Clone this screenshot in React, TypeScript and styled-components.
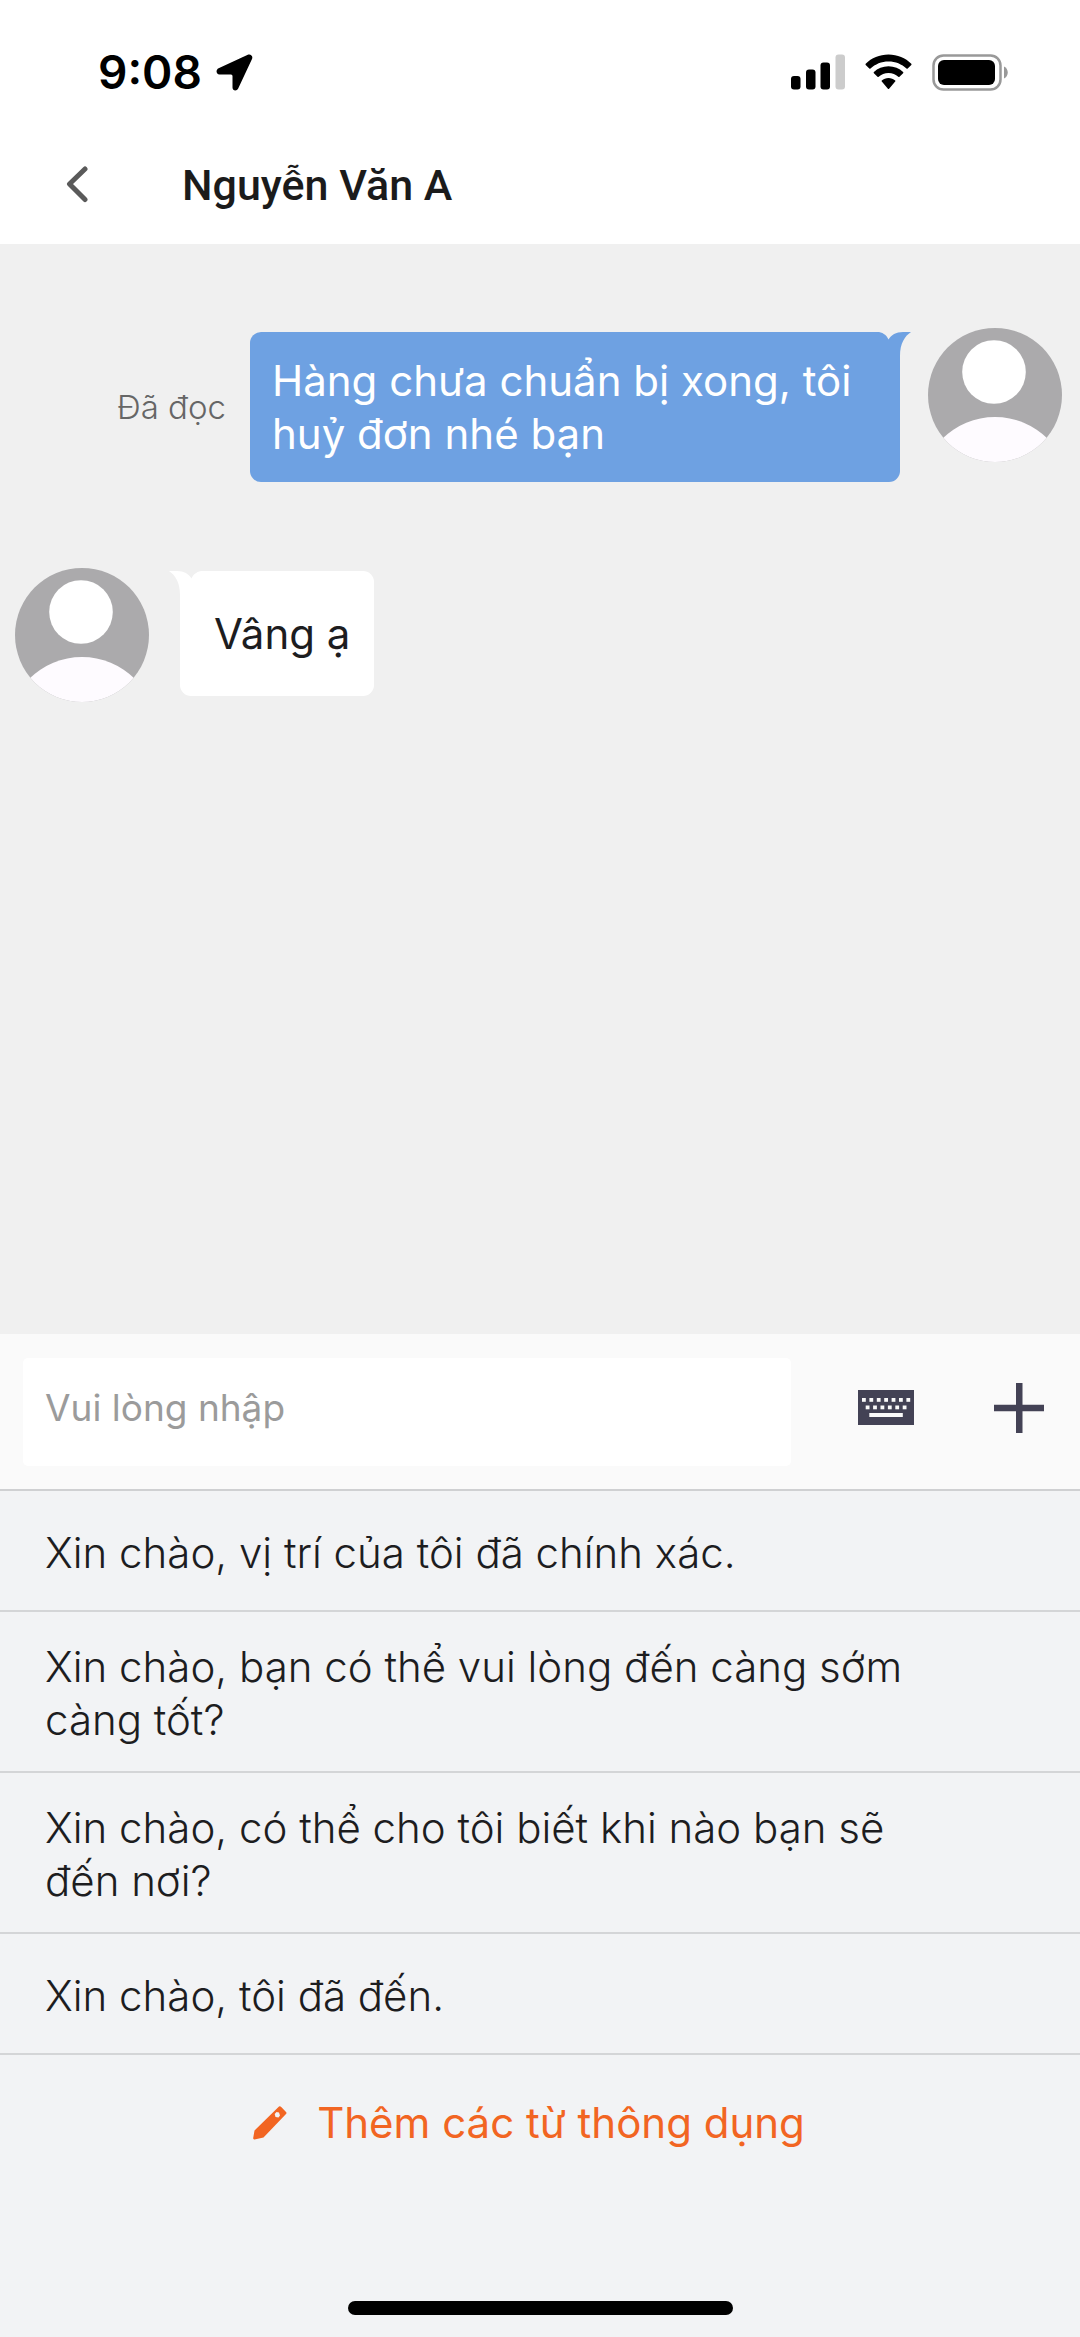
import React from "react";
import styled, { createGlobalStyle } from "styled-components";

const ui = `Inter, "Liberation Sans", sans-serif`;

const GlobalStyle = createGlobalStyle`
  * { box-sizing: border-box; }
  html, body { margin: 0; }
  body { background: #f2f3f5; font-family: ${ui}; color: #1d1d1f; }
  button, input { font: inherit; color: inherit; }
  button { border: 0; padding: 0; background: none; cursor: pointer; }
  svg { display: block; flex: none; }
`;

const Screen = styled.div`
  display: flex;
  flex-direction: column;
  min-height: 100vh;
`;

const StatusBar = styled.div`
  display: flex;
  align-items: center;
  justify-content: space-between;
  height: 144px;
  padding: 0 72px 0 98px;
  background: #fff;
  color: #000;
`;

const StatusGroup = styled.div<{ $gap: number }>`
  display: flex;
  align-items: center;
  gap: ${(p) => p.$gap}px;
`;

const Time = styled.span`
  font-size: 46px;
  line-height: 60px;
  font-weight: 600;
`;

const Header = styled.header`
  display: flex;
  align-items: center;
  gap: 60px;
  height: 100px;
  padding: 0 32px 18px;
  background: #fff;
`;

const BackButton = styled.button`
  display: flex;
  align-items: center;
  justify-content: center;
  width: 90px;
  height: 76px;
`;

const Title = styled.h1`
  margin: 0;
  font-family: Roboto, "Liberation Sans", sans-serif;
  font-size: 43px;
  line-height: 56px;
  font-weight: 500;
  color: #1b1b1b;
`;

const Thread = styled.main`
  flex: 1;
  display: flex;
  flex-direction: column;
  gap: 86px;
  padding: 84px 18px 0 15px;
  background: #f0f0f0;
`;

const MessageRow = styled.div<{ $mine?: boolean }>`
  display: flex;
  flex-direction: ${(p) => (p.$mine ? "row-reverse" : "row")};
  align-items: flex-start;
  gap: ${(p) => (p.$mine ? 28 : 31)}px;
`;

const BubbleGroup = styled.div`
  flex: 1;
  display: flex;
  align-items: center;
  justify-content: flex-end;
  gap: 24px;
  padding-top: 4px;
`;

const Bubble = styled.div<{ $mine?: boolean }>`
  position: relative;
  max-width: 650px;
  margin-top: ${(p) => (p.$mine ? 0 : 3)}px;
  padding: ${(p) => (p.$mine ? "22px" : "36px 24px 36px 34px")};
  border-radius: 11px;
  background: ${(p) => (p.$mine ? "#6ea1e2" : "#fff")};
  color: ${(p) => (p.$mine ? "#fff" : "#1d1d1f")};
  font-size: 42px;
  line-height: 53px;
  font-weight: 400;
`;

const Tail = styled.svg<{ $mine?: boolean }>`
  position: absolute;
  top: 0;
  ${(p) => (p.$mine ? "right: -11px;" : "left: -11px; transform: scaleX(-1);")}
`;

const ReadLabel = styled.span`
  font-size: 33px;
  line-height: 40px;
  font-weight: 300;
  color: #666;
  white-space: nowrap;
`;

const Composer = styled.form`
  display: flex;
  align-items: center;
  height: 155px;
  padding: 0 21px 0 23px;
  background: #fafafa;
`;

const MessageInput = styled.input`
  flex: 1;
  min-width: 0;
  height: 108px;
  padding: 0 22px 8px;
  border: 0;
  border-radius: 5px;
  background: #fff;
  font-size: 37px;
  line-height: 48px;
  outline: none;
  &::placeholder { color: #9b9b9b; opacity: 1; }
`;

const ComposerButton = styled.button<{ $left: number }>`
  display: flex;
  align-items: center;
  justify-content: center;
  width: 80px;
  height: 108px;
  padding-bottom: 8px;
  margin-left: ${(p) => p.$left}px;
  color: #434255;
`;

const PhraseList = styled.ul`
  margin: 0;
  padding: 0;
  list-style: none;
  border-top: 2px solid #cfd0d2;
`;

const PhraseItem = styled.li`
  border-bottom: 2px solid #d4d5d7;
`;

const PhraseButton = styled.button`
  display: flex;
  align-items: center;
  width: 100%;
  min-height: 119px;
  padding: 28px 120px 25px 45px;
  text-align: left;
  font-size: 42px;
  line-height: 53px;
  font-weight: 300;
`;

const Footer = styled.footer`
  display: flex;
  flex-direction: column;
  align-items: center;
  justify-content: space-between;
  height: 282px;
  padding: 41px 0 22px;
`;

const AddButton = styled.button`
  display: flex;
  align-items: center;
  gap: 30px;
  margin-right: 22px;
  color: #f26522;
  font-size: 42px;
  line-height: 53px;
`;

const HomeIndicator = styled.div`
  width: 385px;
  height: 14px;
  border-radius: 7px;
  background: #000;
`;

const LocationIcon = () => (
  <svg width="37" height="37" viewBox="0 0 37 37" aria-hidden="true">
    <path d="M31.800 0.800 L2.600 14.300 C-0.500 15.800 0 20.500 3.500 20.500 L15 20.500 Q16.500 20.500 16.500 22 L16.500 33.500 C16.500 37 20.800 37.500 22.200 34.500 L36 5 C37.300 2.200 34.500 -0.400 31.800 0.800Z" fill="#000" />
  </svg>
);

const SignalIcon = () => (
  <svg width="54" height="36" viewBox="0 0 54 36" aria-hidden="true">
    <rect x="0" y="22" width="9.500" height="13.500" rx="3" />
    <rect x="15" y="15.500" width="9.500" height="20" rx="3" />
    <rect x="29.500" y="8.500" width="9.500" height="27" rx="3" />
    <rect x="44.500" y="0.500" width="9.500" height="35" rx="3" fill="#ccc" />
  </svg>
);

const WifiIcon = () => (
  <svg width="47" height="36" viewBox="0 0 47 36" aria-hidden="true">
    <path d="M23.500 0.500 C14.500 0.500 6.500 4 0.700 9.700 Q0.200 10.300 0.700 10.900 L4.300 14.500 Q4.900 15 5.500 14.500 C10.200 10 16.500 7.400 23.500 7.400 C30.500 7.400 36.800 10 41.500 14.500 Q42.100 15 42.700 14.500 L46.300 10.900 Q46.800 10.300 46.300 9.700 C40.500 4 32.500 0.500 23.500 0.500Z" />
    <path d="M23.500 12.300 C17.800 12.300 12.700 14.500 8.900 18 Q8.300 18.600 8.900 19.200 L12.500 22.800 Q13.100 23.300 13.700 22.800 C16.300 20.500 19.700 19.100 23.500 19.100 C27.300 19.100 30.700 20.500 33.300 22.800 Q33.900 23.300 34.500 22.800 L38.100 19.200 Q38.700 18.600 38.100 18 C34.300 14.500 29.200 12.300 23.500 12.300Z" />
    <path d="M23.500 24 C20.900 24 18.600 24.900 16.800 26.400 Q16.200 27 16.800 27.600 L22.900 34.800 Q23.500 35.400 24.100 34.800 L30.200 27.600 Q30.800 27 30.200 26.400 C28.400 24.900 26.100 24 23.500 24Z" />
  </svg>
);

const BatteryIcon = () => (
  <svg width="76" height="37" viewBox="0 0 76 37" aria-hidden="true">
    <rect x="1.500" y="1.500" width="67" height="34" rx="10" fill="none" stroke="#999" strokeWidth="2.500" />
    <rect x="6" y="6" width="57" height="25" rx="6" />
    <path d="M72 12.500 C77 14.500 77 22.500 72 24.500Z" fill="#999" />
  </svg>
);

const BackIcon = () => (
  <svg width="24" height="38" viewBox="0 0 24 38" aria-hidden="true">
    <path d="M20 3 L4.500 18 L20 33.500" fill="none" stroke="#5a5a5a" strokeWidth="5" strokeLinecap="round" strokeLinejoin="round" />
  </svg>
);

const Avatar = () => (
  <svg width="134" height="134" viewBox="0 0 134 134" role="img" aria-label="Avatar">
    <defs>
      <clipPath id="disc"><circle cx="67" cy="67" r="67" /></clipPath>
    </defs>
    <circle cx="67" cy="67" r="67" fill="#abaaac" />
    <circle cx="66" cy="44" r="31.800" fill="#fff" />
    <circle cx="67" cy="164" r="75" fill="#fefbff" clipPath="url(#disc)" />
  </svg>
);

const BubbleTail = ({ mine }: { mine?: boolean }) => (
  <Tail $mine={mine} width="32" height="32" viewBox="0 0 32 32" aria-hidden="true">
    <path d="M0 0 H32 C26 4 21 11 21 24 V32 H0Z" fill={mine ? "#6ea1e2" : "#fff"} />
    <path d="M0 0 C5 1 8 4 9.500 7.500 C12 3 17 0 24 0Z" fill="#f0f0f0" />
  </Tail>
);

const KeyboardIcon = () => (
  <svg width="56" height="35" viewBox="0 0 56 35" aria-hidden="true">
    <rect width="56" height="35" fill="currentColor" />
    {[0, 1, 2, 3, 4, 5, 6].map((i) => (
      <rect key={i} x={4 + i * 7.4} y="8" width="3.800" height="3.800" fill="#fafafa" />
    ))}
    {[0, 1, 2, 3, 4, 5].map((i) => (
      <rect key={i} x={7.7 + i * 7.4} y="15.500" width="3.800" height="3.800" fill="#fafafa" />
    ))}
    <rect x="11.300" y="23" width="33.500" height="4" fill="#fafafa" />
  </svg>
);

const PlusIcon = () => (
  <svg width="50" height="50" viewBox="0 0 50 50" aria-hidden="true">
    <path d="M22 0 H28.500 V21.700 H50 V28.200 H28.500 V50 H22 V28.200 H0 V21.700 H22Z" fill="currentColor" />
  </svg>
);

const PencilIcon = () => (
  <svg width="34" height="34" viewBox="0 0 34 34" aria-hidden="true">
    <path fillRule="evenodd" d="M26 0.500 Q27 -0.300 28 0.700 L33 6 Q34 7 33 8 L10.500 31.500 L1.500 33.500 Q0 33.700 0.200 32 L1.500 24.500Z M23.500 6 L21.700 8 L22.500 11 L25.500 11.500 L27 9.500 L26 6.500Z" fill="currentColor" />
  </svg>
);

const phrases = [
  "Xin chào, vị trí của tôi đã chính xác.",
  "Xin chào, bạn có thể vui lòng đến càng sớm càng tốt?",
  "Xin chào, có thể cho tôi biết khi nào bạn sẽ đến nơi?",
  "Xin chào, tôi đã đến.",
];

export default function App() {
  return (
    <Screen>
      <GlobalStyle />
      <StatusBar>
        <StatusGroup $gap={14}>
          <Time>9:08</Time>
          <LocationIcon />
        </StatusGroup>
        <StatusGroup $gap={20}>
          <SignalIcon />
          <WifiIcon />
          <BatteryIcon />
        </StatusGroup>
      </StatusBar>
      <Header>
        <BackButton type="button" aria-label="Quay lại"><BackIcon /></BackButton>
        <Title>Nguyễn Văn A</Title>
      </Header>
      <Thread>
        <MessageRow $mine>
          <Avatar />
          <BubbleGroup>
            <ReadLabel>Đã đọc</ReadLabel>
            <Bubble $mine>
              Hàng chưa chuẩn bị xong, tôi huỷ đơn nhé bạn
              <BubbleTail mine />
            </Bubble>
          </BubbleGroup>
        </MessageRow>
        <MessageRow>
          <Avatar />
          <Bubble>
            Vâng ạ
            <BubbleTail />
          </Bubble>
        </MessageRow>
      </Thread>
      <Composer onSubmit={(e) => e.preventDefault()}>
        <MessageInput type="text" aria-label="Tin nhắn" placeholder="Vui lòng nhập" />
        <ComposerButton type="button" aria-label="Bàn phím" $left={55}><KeyboardIcon /></ComposerButton>
        <ComposerButton type="button" aria-label="Thêm" $left={53}><PlusIcon /></ComposerButton>
      </Composer>
      <PhraseList>
        {phrases.map((text) => (
          <PhraseItem key={text}>
            <PhraseButton type="button">{text}</PhraseButton>
          </PhraseItem>
        ))}
      </PhraseList>
      <Footer>
        <AddButton type="button">
          <PencilIcon />
          Thêm các từ thông dụng
        </AddButton>
        <HomeIndicator />
      </Footer>
    </Screen>
  );
}
